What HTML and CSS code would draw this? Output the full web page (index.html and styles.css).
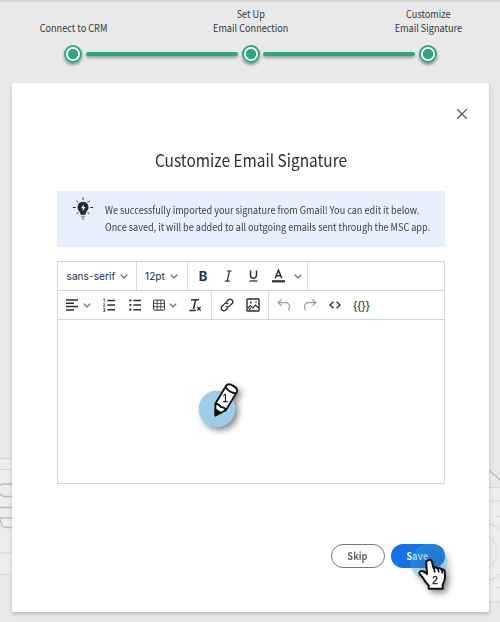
FILE: index.html
```html
<!DOCTYPE html>
<html lang="en">
<head>
<meta charset="utf-8">
<title>Customize Email Signature</title>
<link rel="stylesheet" href="styles.css">
</head>
<body>
<svg class="backdrop" viewBox="0 0 500 622" fill="none">
  <path d="M0 458H13V574H0zM489 488H500V602H489z" fill="#ededee"/>
  <g stroke="#d5d5d7"><path d="M0 458.5H13M0 469.5H13M0 553H13M0 574.5H13M489 487.5H500M489 501H500M497 516.5H500M497 587.5H500M489 602H500"/>
  <circle cx="480" cy="552" r="17.500"/><circle cx="480" cy="552" r="30"/></g>
  <path d="M13 484H4Q0 484 0 486M0 494Q2 496.500 5 496.500H13M0 507.500H13M0 518H13M0 519L2 526Q3 527.500 6 527.500H13M489 470L500 480" stroke="#bcbcbe" stroke-width="1.300"/>
</svg>
<main class="page">
  <ol class="steps">
    <li class="step"><span class="label">Connect to CRM</span><i class="dot"></i></li>
    <li class="bar"></li>
    <li class="step"><span class="label">Set Up<br>Email Connection</span><i class="dot"></i></li>
    <li class="bar"></li>
    <li class="step"><span class="label">Customize<br>Email Signature</span><i class="dot"></i></li>
  </ol>
  <section class="card">
    <button class="close" aria-label="Close"><svg width="12" height="12" viewBox="0 0 12 12"><path d="M1.200 1.200l9.600 9.600M10.800 1.200l-9.600 9.600" stroke="#5f5f5f" stroke-width="1.350"/></svg></button>
    <h1>Customize Email Signature</h1>
    <div class="notice">
      <svg width="22" height="24" viewBox="0 0 22 24" fill="none">
        <path d="M11 .5v2.700M4.200 3.600l2 2M17.800 3.600l-2 2M.8 10.500h3M18.200 10.500h3M4.500 17l1.800-1.800M17.500 17l-1.800-1.800" stroke="#303234" stroke-width="1"/>
        <path d="M11 4.700a5.500 5.500 0 0 0-5.500 5.600c0 2.500 1.600 3.600 2.500 5.200.4.700.5 1.400.5 2.200h5c0-.8.100-1.500.5-2.200.9-1.600 2.500-2.700 2.500-5.200A5.500 5.500 0 0 0 11 4.700z" fill="#242628"/>
        <path d="M11.600 7.200l-2.500 4h1.700v3.200l2.600-4.400h-1.800z" fill="#e8f2fe"/>
        <path d="M8.800 19.300h4.400M9.300 21h3.400M10.300 22.500h1.500" stroke="#85898d" stroke-width="1"/>
      </svg>
      <p>We successfully imported your signature from Gmail! You can edit it below.<br>Once saved, it will be added to all outgoing emails sent through the MSC app.</p>
    </div>
    <div class="editor">
      <div class="row">
        <div class="group font"><span>sans-serif</span><svg class="chev" viewBox="0 0 8 5"><path d="M.7.700L4 4 7.300.700"/></svg></div>
        <div class="group size"><span>12pt</span><svg class="chev" viewBox="0 0 8 5"><path d="M.7.700L4 4 7.300.700"/></svg></div>
        <div class="group style">
          <b class="tool">B</b>
          <svg class="tool" viewBox="0 0 25 16"><path d="M10.700 3h5M8.800 13.200h5M13.500 3l-2.300 10.200" stroke-width="1.200"/></svg>
          <svg class="tool" viewBox="0 0 25 16"><path d="M9.500 2.500v4.700a3 3 0 0 0 6 0V2.500" stroke-width="1.500"/><path d="M8.500 13h8" stroke-width="1.300"/></svg>
          <svg class="tool" viewBox="0 0 25 16"><path d="M9.200 10.300l3.300-8 3.300 8M10.300 7.700h4.400" stroke-width="1.500"/><path d="M6 13.300h13" stroke-width="2.200"/></svg>
          <svg class="chev after-color" viewBox="0 0 8 5"><path d="M.7.700L4 4 7.300.700"/></svg>
        </div>
      </div>
      <div class="row">
        <div class="group blocks">
          <svg class="ico" viewBox="0 0 12 14"><path d="M0 2h12M0 5.300h8M0 8.600h12M0 12h8" stroke-width="1.500"/></svg>
          <svg class="chev c2" viewBox="0 0 8 5"><path d="M.7.700L4 4 7.300.700"/></svg>
          <svg class="ico num" viewBox="0 0 12 14"><path d="M4.300 2.500H12M4.300 7H12M4.300 11.700H12" stroke-width="1.500"/><path d="M.3 1.200l1-.5v3M.2 5.800h1.500v1L.3 8.400h1.800M.2 10.500h1.700v3H.2M.6 12h1.200" stroke-width=".75"/></svg>
          <svg class="ico bul" viewBox="0 0 12 14"><path d="M4.300 2.500H12M4.300 7H12M4.300 11.700H12" stroke-width="1.500"/><path d="M.4 2.500h2M.4 7h2M.4 11.700h2" stroke-width="2"/></svg>
          <svg class="ico tab" viewBox="0 0 12 14"><rect x=".6" y="2.100" width="10.800" height="10" rx=".8"/><path d="M.6 5.400h10.800M.6 8.700h10.800M4.200 2v10M7.800 2v10" stroke-width=".8"/></svg>
          <svg class="chev c3" viewBox="0 0 8 5"><path d="M.7.700L4 4 7.300.700"/></svg>
          <svg class="ico clr" viewBox="0 0 13 14"><path d="M2 1.700h8M6.700 1.700L4.500 11M.3 12.500h6.500" stroke-width="1.500"/><path d="M8.300 8.800l3.400 3.700M11.700 8.800l-3.400 3.700" stroke-width="1.200"/></svg>
        </div>
        <div class="group insert">
          <svg class="ico wide" viewBox="0 0 14 14"><g transform="rotate(-45 7 7)" stroke-width="1.350"><path d="M5.500 9.600H2.600a2.600 2.600 0 0 1 0-5.200H6A2.600 2.600 0 0 1 8.600 7"/><path d="M8.500 4.400h2.900a2.600 2.600 0 0 1 0 5.200H8A2.600 2.600 0 0 1 5.400 7"/></g></svg>
          <svg class="ico wide img" viewBox="0 0 14 14"><rect x="1" y="1" width="12" height="12" rx=".6" stroke-width="1.400"/><path d="M1.500 10.500l3-3 2.300 2.300 2.700-2.800 3 3M3 12l2-2" stroke-width="1.200"/><circle cx="5" cy="4.500" r="1" fill="#27313f" stroke="none"/><path d="M9 4h2" stroke-width="1"/></svg>
        </div>
        <div class="group history">
          <svg class="ico wide off" viewBox="0 0 14 14"><path d="M4.500 1.500L1.300 4.700l3.200 3.200M1.500 4.700h7a4 4 0 0 1 3.800 5.500l-.8 2.100"/></svg>
          <svg class="ico wide off redo" viewBox="0 0 14 14"><path d="M9.500 1.500l3.200 3.200-3.200 3.200M12.500 4.700h-7a4 4 0 0 0-3.800 5.500l.8 2.100"/></svg>
          <svg class="ico code" viewBox="0 0 12 14"><path d="M4.400 3.800L1 7l3.400 3.200M7.600 3.800L11 7l-3.400 3.200" stroke-width="1.400"/></svg>
          <span class="token">{{}}</span>
        </div>
      </div>
      <div class="content" contenteditable="true"></div>
    </div>
    <footer><button class="btn skip"><span>Skip</span></button><button class="btn save"><span>Save</span></button></footer>
  </section>
</main>
<svg class="marker pencil" width="56" height="60" viewBox="0 0 56 60">
  <circle cx="22" cy="31" r="18.300" fill="#9dcdeb"/>
  <g transform="translate(20.500 37.500) rotate(31)" stroke="#111" stroke-width="1.900" stroke-linejoin="round">
    <path d="M0 0L-6.200-10V-31Q-6-34.500 0-34.500T6.200-31V-10Z" fill="#fff"/>
    <path d="M0 0L-3-5H3Z" fill="#111"/><path d="M-6.200-10Q-3-12 0-10Q3-12 6.200-10M-6.200-29.500Q0-26.500 6.200-29.500" fill="none"/>
  </g>
  <text x="27.500" y="24" class="digit">1</text>
</svg>
<svg class="marker hand" width="60" height="60" viewBox="0 0 60 60">
  <circle cx="19" cy="14.500" r="18.500" fill="#45b0f0" fill-opacity=".35"/>
  <path d="M17.800 12.500q2.500-2 4 .7l1.700 6.800q2.500-1.500 4 .5 2.500-1.300 3.700 1 3-.7 3.500 2l.3 5.500q-.1 4-2.300 7.500v4.300H18.700v-3.200Q15 34 12.700 29.500q-1.900-2.200-3-3.200-1-2.200 1.300-3.200 2.500-.6 6 3L16.300 15q-.3-2 1.500-2.500z" fill="#fff" stroke="#111" stroke-width="2" stroke-linejoin="round"/>
  <path d="M24 20l.8 4.500M28.200 21l.5 3.500M32 22l.3 3.500" stroke="#111" stroke-width="1.700"/>
  <text x="22.200" y="36" class="digit">2</text>
</svg>
</body>
</html>
```

FILE: styles.css
```css
* { box-sizing: border-box; }
body { margin: 0; width: 500px; height: 622px; overflow: hidden; background: #e9e9eb; color: #303030; font-family: "Noto Sans CJK SC", "Open Sans", sans-serif; }
.backdrop { position: absolute; left: 0; top: 0; width: 500px; height: 622px; }
.page { position: relative; height: 622px; padding: 7px 11px 0 12px; border-top: 1px solid #dadadb; box-shadow: inset 0 2px 1px -1px #d4d4d6; }
.steps { display: flex; align-items: flex-end; justify-content: center; margin: 0 0 19.500px; padding: 0; height: 55px; list-style: none; }
.step { display: flex; flex-direction: column; align-items: center; width: 18px; }
.label { white-space: nowrap; text-align: center; font-size: 10px; line-height: 13.500px; margin-bottom: 11px; color: #383838; transform: translateX(.5px) scaleX(.915); }
.dot { width: 18px; height: 18px; border-radius: 50%; border: 2px solid #2da77f; background: radial-gradient(circle, #2da77f 0 4.800px, #fff 5.400px); box-shadow: 0 2px 3px #0006; }
.bar { width: 152px; height: 4px; margin: 0 3.750px 7px; border-radius: 2px; background: #2da77f; box-shadow: 0 2px 3px #0005; }
.card { display: flex; flex-direction: column; width: 477px; height: 529.500px; padding: 22.500px 44.500px 0; border-radius: 2px; background: #fff; box-shadow: 0 2px 4px #0003; }
button { font-family: inherit; }
.close { align-self: flex-end; margin-right: -23px; width: 12px; height: 16px; padding: 0; border: 0; background: none; }
.close svg { display: block; margin-top: 2px; }
h1 { margin: 27.500px 0 20px; height: 22px; line-height: 22px; text-align: center; font-size: 17px; font-weight: 400; white-space: nowrap; transform: scaleX(.907); }
.notice { display: flex; height: 56px; padding: 6px 0 0 15.500px; background: #e7f1fe; }
.notice svg { flex: none; }
.notice p { margin: 5.500px 0 0 11px; font-size: 10.200px; line-height: 16.500px; white-space: nowrap; color: #3b4045; transform: scaleX(.893); transform-origin: left; }
.editor { display: flex; flex-direction: column; height: 223px; margin-top: 14.500px; border: 1px solid #d5d5d5; }
.row { display: flex; height: 29px; border-bottom: 1px solid #d5d5d5; }
.group { display: flex; align-items: center; border-right: 1px solid #d9d9d9; font: 10.200px Inter, sans-serif; color: #27313f; }
.font { width: 79px; padding-left: 9px; gap: 5px; }
.size { width: 51px; padding-left: 8.500px; gap: 5px; }
.style { width: 120px; padding-left: 3px; }
.blocks { width: 154px; padding-left: 8.500px; }
.insert { width: 57px; padding-left: 8.500px; }
.history { padding-left: 8px; border: 0; }
svg { fill: none; }
.group svg { stroke: #27313f; flex: none; }
.group .chev { width: 8px; height: 5px; stroke: #5a626d; stroke-width: 1.200; }
.tool { width: 25px; height: 16px; text-align: center; font: bold 13px/16px Inter, sans-serif; }
.after-color { margin-left: 3px; }
.ico { width: 12px; height: 14px; }
.wide { width: 14px; }
.c2 { margin-left: 4.500px; }
.num { margin-left: 12px; }
.bul { margin-left: 14px; }
.tab { margin-left: 12px; }
.c3 { margin-left: 4.500px; }
.clr { width: 13px; margin-left: 11.500px; }
.img { margin-left: 11.500px; }
.group .off { stroke: #959a9f; stroke-width: 1.200; }
.redo { margin-left: 12px; }
.code { margin-left: 12px; }
.token { margin-left: 12px; font-size: 12px; letter-spacing: -.9px; }
.content { flex: 1; }
footer { display: flex; justify-content: flex-end; gap: 6px; margin-top: 59.500px; }
.btn { width: 54px; height: 24px; padding: 0; border-radius: 12px; font-size: 10.500px; font-weight: 700; line-height: 20px; }
.btn span { display: inline-block; transform: scaleX(.88); }
.skip { border: 1.500px solid #777; background: #fff; color: #666; }
.save { border: 0; background: #1473e6; color: #fff; }
.marker { position: absolute; overflow: visible; filter: drop-shadow(3px 3px 3px #0007); }
.pencil { left: 195px; top: 378px; }
.hand { left: 410px; top: 548px; }
.digit { font: 10px "Liberation Sans", sans-serif; fill: #111; stroke: #111; stroke-width: .3; }
```
